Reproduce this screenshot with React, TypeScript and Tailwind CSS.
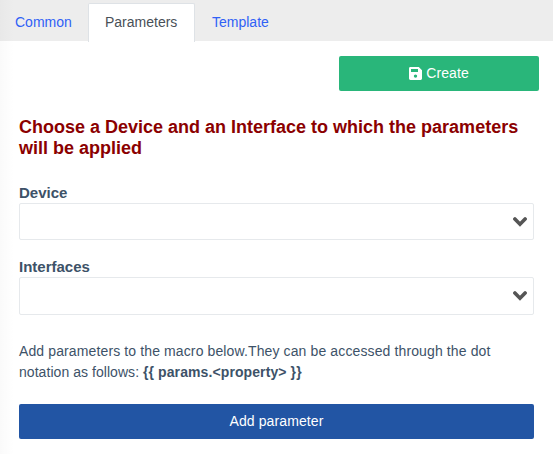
import React from "react";

const tabs = ["Common", "Parameters", "Template"];

function SaveIcon() {
  return (
    <svg width="13" height="13" viewBox="0 0 13 13" className="shrink-0">
      <path
        fill="currentColor"
        fillRule="evenodd"
        d="M1.4 0H9.8L13 3.2V11.6Q13 13 11.6 13H1.4Q0 13 0 11.6V1.4Q0 0 1.4 0ZM2 2V5H9V2ZM6.5 7.4A1.7 1.7 0 1 0 6.5 10.8A1.7 1.7 0 1 0 6.5 7.4Z"
      />
    </svg>
  );
}

function SelectField({ label, height }: { label: string; height: string }) {
  return (
    <div>
      <label className="block h-[20px] text-[15px] font-bold leading-[20px]">
        {label}
      </label>
      <div
        className={`flex items-center justify-end rounded-[2px] border border-[#e6e9ec] pr-[6px] ${height}`}
      >
        <svg width="14" height="10" viewBox="0 0 14 10" fill="none">
          <path
            d="M1.9 2L7 7.2L12.1 2"
            stroke="#555"
            strokeWidth="3.6"
            strokeLinecap="round"
          />
        </svg>
      </div>
    </div>
  );
}

export default function App() {
  return (
    <div
      className="relative h-[454px] w-[553px] overflow-hidden bg-white text-[14px] text-[#3d5268]"
      style={{ fontFamily: '"Liberation Sans", Arial, sans-serif' }}
    >
      <div className="flex h-[41px] bg-[#ededed] pt-[3px]">
        {tabs.map((tab, i) =>
          i === 1 ? (
            <div
              key={tab}
              className="h-[39px] w-[107px] rounded-t-[2px] border border-b-0 border-[#dee2e6] bg-white pl-[16px] pt-[8px] leading-[21px] text-[#495057]"
            >
              {tab}
            </div>
          ) : (
            <div
              key={tab}
              className="px-[17px] pt-[9px] leading-[21px] text-[#3061f6] first:w-[88px] first:pr-0 first:pl-[15px]"
            >
              {tab}
            </div>
          ),
        )}
      </div>
      <div className="pl-[19px]">
        <button className="mt-[15px] ml-[320px] flex h-[35px] w-[200px] items-center justify-center gap-[4px] rounded-[2px] bg-[#29b67a] text-white">
          <SaveIcon />
          <span className="tracking-[0.1px]">Create</span>
        </button>
        <h1 className="mt-[26px] w-[515px] text-[18px] font-bold leading-[21px] text-[#8b0000]">
          Choose a Device and an Interface to which the parameters will be applied
        </h1>
        <div className="mt-[24px] w-[515px]">
          <SelectField label="Device" height="h-[37px]" />
          <div className="h-[17px]" />
          <SelectField label="Interfaces" height="h-[38px]" />
          <p className="mt-[26px] leading-[21px]">
            <span className="tracking-[0.12px]">
              Add parameters to the macro below.They can be accessed through the dot
            </span>{" "}
            <span className="tracking-[0.05px]">notation as follows:</span>{" "}
            <b className="tracking-[0.1px]">{"{{ params.<property> }}"}</b>
          </p>
          <button className="mt-[21px] flex h-[35px] w-full items-center justify-center rounded-[2px] bg-[#2255a4] tracking-[0.1px] text-white">
            Add parameter
          </button>
        </div>
      </div>
      <div className="pointer-events-none absolute inset-y-0 left-0 w-[14px] bg-gradient-to-r from-black/2 to-transparent" />
    </div>
  );
}
